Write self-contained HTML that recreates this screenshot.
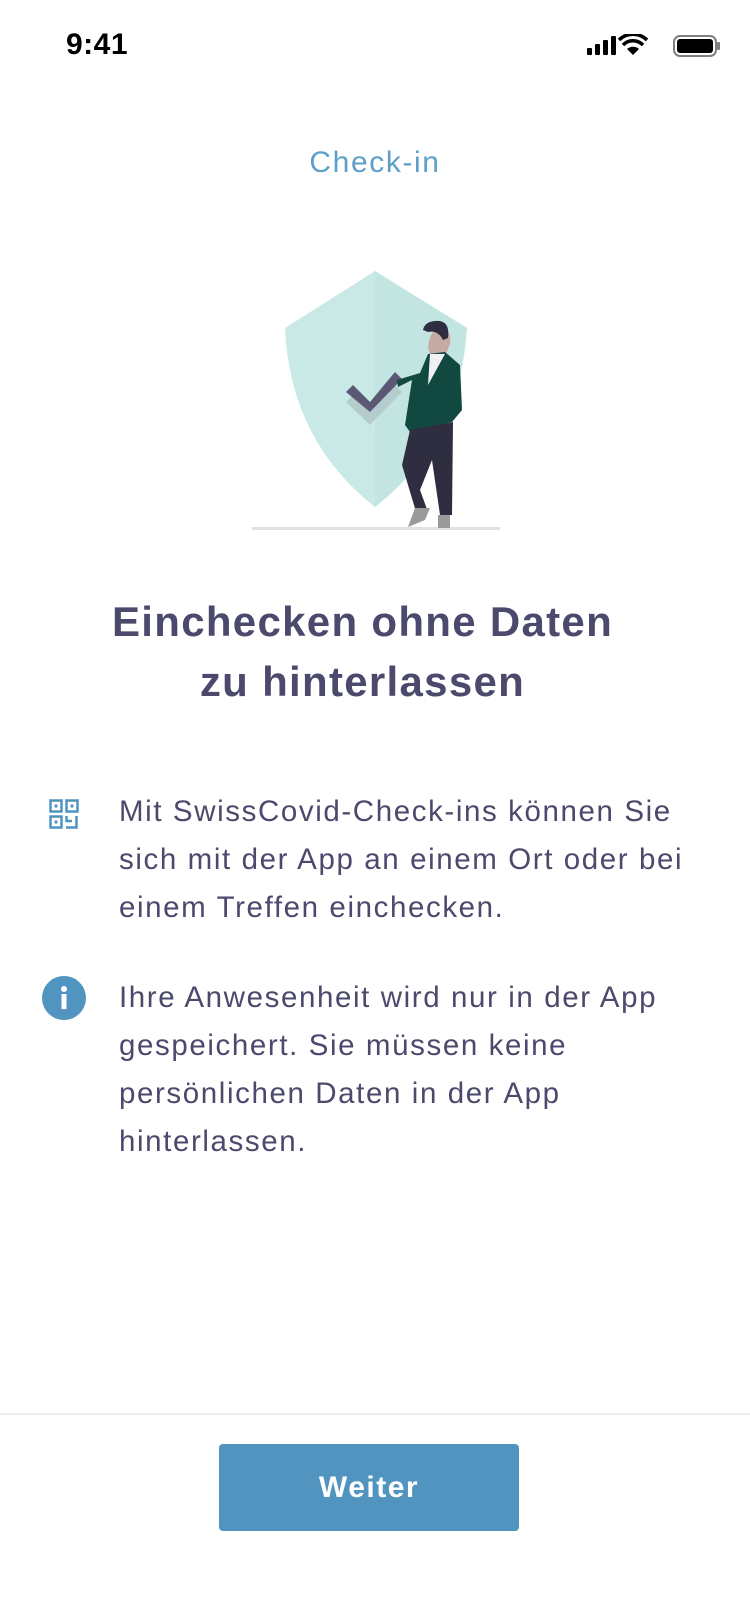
<!DOCTYPE html>
<html><head><meta charset="utf-8"><style>
*{margin:0;padding:0;box-sizing:border-box}
body{width:750px;height:1624px;background:#fff;position:relative;overflow:hidden;font-family:"Liberation Sans",sans-serif;color:#4b4a6c}
.abs{position:absolute}
.p{position:absolute;left:119px;font-size:29.5px;letter-spacing:1.6px;line-height:48px;color:#4b4a6c;width:640px;white-space:nowrap}
</style></head><body>
<div class="abs" style="left:66px;top:28px;font-size:30px;font-weight:bold;color:#000;letter-spacing:0.5px">9:41</div>
<svg class="abs" style="left:585px;top:34px" width="136" height="24" viewBox="0 0 136 24">
<rect x="2" y="14" width="5" height="7" rx="1" fill="#000"/><rect x="10" y="10" width="5" height="11" rx="1" fill="#000"/><rect x="18" y="6" width="5" height="15" rx="1" fill="#000"/><rect x="26" y="2" width="5" height="19" rx="1" fill="#000"/>
<path d="M48 21 L42 15 A9 9 0 0 1 54 15 Z" fill="#000"/><path d="M38 11 A14 14 0 0 1 58 11" stroke="#000" stroke-width="3.5" fill="none"/><path d="M34 6 A20 20 0 0 1 62 6" stroke="#000" stroke-width="3.5" fill="none"/>
<rect x="89" y="2" width="42" height="20" rx="6" stroke="#000" stroke-width="2" fill="none" opacity="0.5"/><rect x="92" y="5" width="36" height="14" rx="3" fill="#000"/><rect x="132" y="8" width="3" height="8" rx="1" fill="#000" opacity="0.5"/>
</svg>
<div class="abs" style="left:0;width:750px;top:146px;text-align:center;font-size:30px;letter-spacing:1.6px;color:#5e9fc9">Check-in</div>
<svg class="abs" style="left:230px;top:250px" width="280" height="290" viewBox="0 0 280 290">
<path d="M145 21 L55 78 Q60 190 145 257 Q230 190 237 78 Z" fill="#c8e9e6"/>
<path d="M145 21 L237 78 Q230 190 145 257 Z" fill="#c0e3e0" opacity="0.6"/>
<path d="M123 145 L140 162 L165 135 L172 142 L140 175 L116 152Z" fill="#b5cccc"/>
<path d="M123 135 L140 152 L165 122 L172 129 L140 162 L116 142Z" fill="#5a5873"/>
<rect x="22" y="277" width="248" height="3" fill="#e0e0e6"/>
<path d="M198 97 Q200 78 212 78 Q222 80 220 94 L216 104 L200 104Z" fill="#c7a9a4"/>
<path d="M193 80 Q195 70 210 71 Q220 73 218 88 L213 90 Q208 80 198 82Z" fill="#2f2e41"/>
<path d="M198 104 L215 102 L230 115 L232 160 L222 172 L180 182 L175 175 L182 130 L168 137 L167 130 L190 123Z" fill="#114840"/>
<path d="M200 104 L215 104 L198 135Z" fill="#f1f1f3"/>
<path d="M180 180 L223 172 L222 265 L210 265 L202 210 L190 240 L198 262 L187 265 L172 215Z" fill="#2f2e41"/>
<path d="M185 258 L200 258 L195 270 L178 277Z" fill="#9a9a9a"/>
<path d="M208 265 L220 265 L220 278 L208 278Z" fill="#9a9a9a"/>
</svg>
<div class="abs" style="left:0;width:725px;top:592px;text-align:center;font-size:42px;letter-spacing:1.3px;line-height:60px;font-weight:bold;color:#4b4a6c">Einchecken ohne Daten<br>zu hinterlassen</div>
<svg class="abs" style="left:49px;top:799px" width="30" height="30" viewBox="0 0 30 30" fill="none" stroke="#5094bf" stroke-width="2.5">
<rect x="1.5" y="1.5" width="11" height="11"/><rect x="17.5" y="1.5" width="11" height="11"/><rect x="1.5" y="17.5" width="11" height="11"/>
<rect x="5.5" y="5.5" width="3" height="3" fill="#5094bf" stroke="none"/><rect x="21.5" y="5.5" width="3" height="3" fill="#5094bf" stroke="none"/><rect x="5.5" y="21.5" width="3" height="3" fill="#5094bf" stroke="none"/>
<path d="M17.5 17 V22 H23 M27.5 17 V28.5 H17"/>
</svg>
<div class="p" style="top:788px">Mit SwissCovid-Check-ins können Sie<br>sich mit der App an einem Ort oder bei<br>einem Treffen einchecken.</div>
<svg class="abs" style="left:42px;top:976px" width="44" height="44" viewBox="0 0 44 44"><circle cx="22" cy="22" r="22" fill="#5094bf"/><circle cx="22" cy="13" r="3" fill="#fff"/><rect x="19.5" y="18" width="5" height="15" fill="#fff"/></svg>
<div class="p" style="top:974px">Ihre Anwesenheit wird nur in der App<br>gespeichert. Sie müssen keine<br>persönlichen Daten in der App<br>hinterlassen.</div>
<div class="abs" style="left:0;top:1413px;width:750px;height:2px;background:#eeeef1"></div>
<div class="abs" style="left:219px;top:1444px;width:300px;height:87px;background:#5094bf;border-radius:4px;color:#fff;font-size:30px;letter-spacing:1.5px;font-weight:bold;text-align:center;line-height:87px">Weiter</div>
</body></html>
